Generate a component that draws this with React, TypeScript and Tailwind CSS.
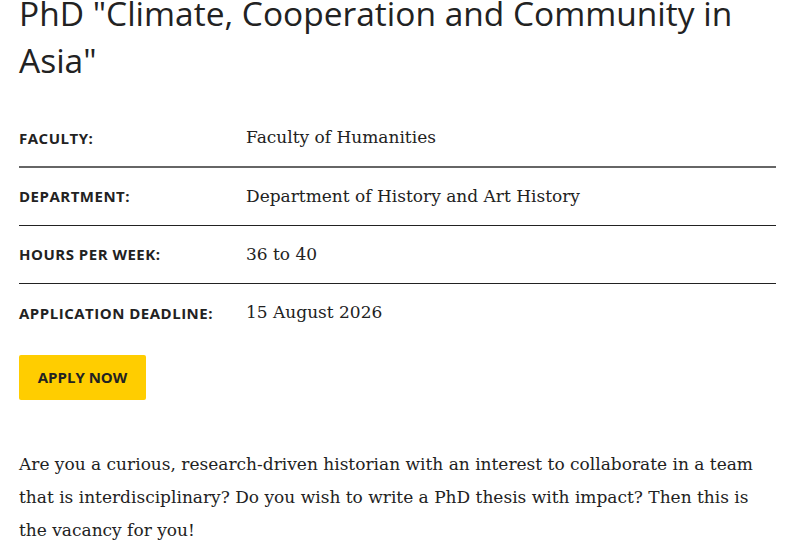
import React from 'react';

const rows: { label: string; value: string }[] = [
  { label: 'Faculty:', value: 'Faculty of Humanities' },
  { label: 'Department:', value: 'Department of History and Art History' },
  { label: 'Hours per week:', value: '36 to 40' },
  { label: 'Application deadline:', value: '15 August 2026' },
];

export default function App() {
  return (
    <div className="min-h-[552px] overflow-hidden bg-white pl-[19px] pr-[24px] text-[#222]">
      <h1 className="-mt-[10px] font-['Open_Sans',sans-serif] text-[33.5px] leading-[47px] font-normal">
        PhD "Climate, Cooperation and Community in Asia"
      </h1>

      <div className="mt-[26px]">
        {rows.map((r, i) => (
          <div
            key={r.label}
            className={`flex h-[58px] items-center ${
              i === 0 ? 'border-b-2 border-[#666]' : i < rows.length - 1 ? 'border-b border-[#222]' : ''
            }`}
          >
            <div className="w-[227px] shrink-0 font-['Open_Sans',sans-serif] text-[15px] font-bold uppercase tracking-[0.5px]">
              {r.label}
            </div>
            <div className="font-['DejaVu_Serif',serif] text-[17px]">{r.value}</div>
          </div>
        ))}
      </div>

      <button className="mt-[13px] h-[45px] w-[127px] rounded-[2px] bg-[#ffcd00] font-['Open_Sans',sans-serif] text-[15px] font-bold text-[#222]">
        APPLY NOW
      </button>

      <p className="mt-[48px] max-w-[760px] font-['DejaVu_Serif',serif] text-[17px] leading-[33px]">
        Are you a curious, research-driven historian with an interest to collaborate in a team that is interdisciplinary? Do you wish to write a PhD thesis with impact? Then this is the vacancy for you!
      </p>
    </div>
  );
}
